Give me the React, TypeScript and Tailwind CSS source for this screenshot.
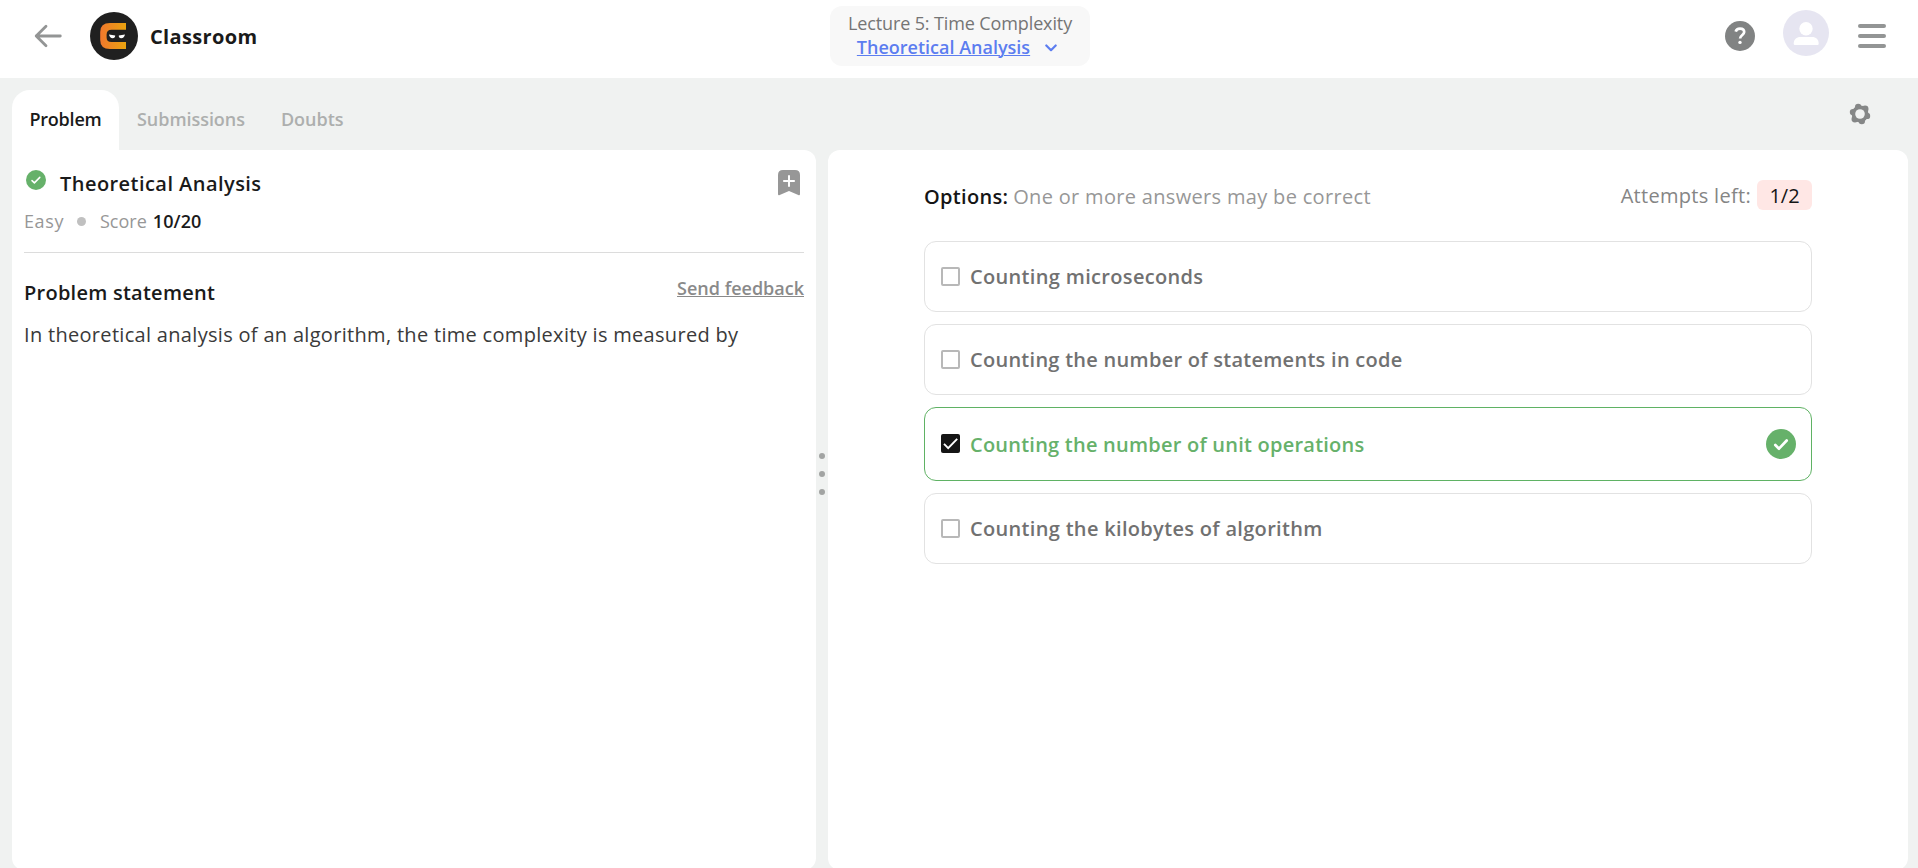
import { useState } from "react";

type Option = { label: string; tracking: string; correct?: boolean };

const options: Option[] = [
  { label: "Counting microseconds", tracking: "tracking-[0.33px]" },
  { label: "Counting the number of statements in code", tracking: "tracking-[0.27px]" },
  { label: "Counting the number of unit operations", tracking: "tracking-[0.23px]", correct: true },
  { label: "Counting the kilobytes of algorithm", tracking: "tracking-[0.32px]" },
];

function BackArrow() {
  return (
    <svg className="h-6 w-7" viewBox="0 0 28 24" fill="none" stroke="#939595" strokeWidth="2.8" strokeLinecap="round" strokeLinejoin="round">
      <path d="M26.300 12H2.200M12 2.200 2.200 12l9.800 9.800" />
    </svg>
  );
}

function Logo() {
  return (
    <svg className="size-12" viewBox="0 0 48 48">
      <defs>
        <linearGradient id="logoFill" x1="0" y1="0" x2="1" y2="0">
          <stop offset="0" stopColor="#f0782d" />
          <stop offset="1" stopColor="#eaa30f" />
        </linearGradient>
      </defs>
      <circle cx="24" cy="24" r="24" fill="#202020" />
      <path d="M20 11H36V17.800H21.500Q16.600 17.800 16.600 22.500V25.500Q16.600 30 21.500 30H36V37H20Q10.200 37 10.200 28V20Q10.200 11 20 11Z" fill="url(#logoFill)" />
      <path d="M19 22.600 25.200 23.500Q25.200 26.200 22.600 26.200 19.800 26.200 19 22.600ZM35 22.600 28.800 23.500Q28.600 26.200 31.200 26.200 34.200 26.200 35 22.600Z" fill="#fff" />
    </svg>
  );
}

function Avatar() {
  return (
    <svg className="size-[46px]" viewBox="0 0 46 46">
      <circle cx="23" cy="23" r="23" fill="#e6e5f1" />
      <circle cx="23" cy="18.800" r="6.700" fill="#fff" />
      <path d="M10.700 33.800C10.700 29.200 13.500 27 17.500 27H29C33 27 35.700 29.200 35.700 33.800Q35.700 35 34.500 35H12Q10.700 35 10.700 33.800Z" fill="#fff" />
    </svg>
  );
}

function Gear() {
  return (
    <svg className="size-5 overflow-visible" viewBox="0 0 20 20">
      <g fill="#858787">
        <circle cx="8.200" cy="3" r="3.200" />
        <circle cx="15.100" cy="4.900" r="3.400" />
        <circle cx="17" cy="11.900" r="3.200" />
        <circle cx="11.800" cy="17" r="3.200" />
        <circle cx="4.900" cy="15.100" r="3.400" />
        <circle cx="3" cy="8.100" r="3.200" />
        <circle cx="10" cy="10" r="8.400" />
      </g>
      <circle cx="10" cy="10" r="4.800" fill="#f0f2f1" />
    </svg>
  );
}

function SolvedBadge() {
  return (
    <svg className="size-5" viewBox="0 0 20 20">
      <circle cx="10" cy="10" r="10" fill="#66b16a" />
      <path d="m6 10.600 2.400 2.300 5.400-5.500" fill="none" stroke="#fff" strokeWidth="1.500" strokeLinecap="round" strokeLinejoin="round" />
    </svg>
  );
}

function BookmarkAdd() {
  return (
    <svg className="h-[26px] w-[22px]" viewBox="0 0 22 26">
      <path d="M5 0H17Q22 0 22 5V24Q22 25.800 20.300 25.100L11 20.900 1.700 25.100Q0 25.800 0 24V5Q0 0 5 0Z" fill="#979797" />
      <path d="M11 5.200V16.800M5.200 11H16.800" stroke="#fff" strokeWidth="2" fill="none" />
    </svg>
  );
}

function Checkbox({ checked, onChange }: { checked: boolean; onChange: () => void }) {
  return (
    <button
      role="checkbox"
      aria-checked={checked}
      onClick={onChange}
      className={
        checked
          ? "mb-px flex size-[19px] items-center justify-center rounded-[2px] bg-[#151515]"
          : "size-[19px] rounded-[2px] border-2 border-[#b8b8b8] bg-white"
      }
    >
      {checked && (
        <svg className="size-[19px]" viewBox="0 0 19 19" fill="none" stroke="#fff" strokeWidth="1.900">
          <path d="m3 9.800 4.200 4.300L16.200 4.800" />
        </svg>
      )}
    </button>
  );
}

export default function App() {
  const [selected, setSelected] = useState<number[]>([2]);
  const toggle = (i: number) =>
    setSelected((s) => (s.includes(i) ? s.filter((x) => x !== i) : [...s, i]));

  return (
    <div className="flex h-screen flex-col overflow-hidden bg-[#f0f2f1] font-['Open_Sans',sans-serif] text-[#1a1a1a]">
      <header className="grid h-[78px] shrink-0 grid-cols-[830px_260px_1fr] bg-white pt-1.5">
        <div className="flex h-[60px] items-center pl-[34px]">
          <BackArrow />
          <div className="ml-7">
            <Logo />
          </div>
          <span className="mt-px ml-3 text-[20px] leading-[30px] font-bold tracking-[0.35px]">Classroom</span>
        </div>

        <div className="flex h-[60px] flex-col items-center rounded-xl bg-[#f8f8f8] pt-[5px]">
          <div className="text-[18px] leading-6 tracking-[-0.12px] text-[#757575]">Lecture 5: Time Complexity</div>
          <button className="mr-1.5 flex items-center text-[18px] leading-6 font-semibold text-[#5c7df0]">
            <span className="underline decoration-1 underline-offset-1">Theoretical Analysis</span>
            <svg className="mt-0.5 ml-[15px] h-2 w-3" viewBox="0 0 12 8" fill="none" stroke="currentColor" strokeWidth="2.200" strokeLinecap="round" strokeLinejoin="round">
              <path d="m1.300 1.500 4.700 4.700 4.700-4.700" />
            </svg>
          </button>
        </div>

        <div className="flex h-[60px] items-center justify-end pr-8">
          <span className="flex size-[30px] items-center justify-center rounded-full bg-[#818383]">
            <svg className="h-[18px] w-3" viewBox="0 0 12 18" fill="none">
              <path d="M1.700 4.700C2.200 2.700 3.700 1.700 6 1.700 8.500 1.700 10.200 3 10.200 5.100 10.200 8 6.100 8 6.100 11.600" stroke="#fff" strokeWidth="2.700" />
              <circle cx="6" cy="15.400" r="1.700" fill="#fff" />
            </svg>
          </span>
          <div className="mb-1.5 ml-7">
            <Avatar />
          </div>
          <div className="ml-[29px] flex w-7 flex-col gap-1.5">
            <span className="h-1 rounded-full bg-[#939595]" />
            <span className="h-1 rounded-full bg-[#939595]" />
            <span className="h-1 rounded-full bg-[#939595]" />
          </div>
        </div>
      </header>

      <nav className="flex h-[72px] shrink-0 items-end justify-between pr-12 pl-3">
        <div className="flex h-[60px] text-[18px] leading-[58px] font-semibold text-[#adafae]">
          <button className="h-[60px] w-[107px] rounded-t-[18px] bg-white pb-0.5 tracking-[-0.2px] text-[#1a1a1a]">Problem</button>
          <button className="ml-[18px] pb-0.5 tracking-[-0.05px]">Submissions</button>
          <button className="ml-9 pb-0.5">Doubts</button>
        </div>
        <div className="mb-[26px]">
          <Gear />
        </div>
      </nav>

      <main className="flex h-[720px] shrink-0 pr-2.5 pl-3">
        <section className="w-[804px] rounded-tr-xl rounded-b-xl bg-white px-3 pt-[18px]">
          <div className="flex h-[30px] items-start">
            <div className="mt-0.5 ml-0.5">
              <SolvedBadge />
            </div>
            <h1 className="mt-px ml-3.5 text-[20px] leading-[30px] font-semibold tracking-[0.45px]">Theoretical Analysis</h1>
            <div className="mt-0.5 mr-1 ml-auto">
              <BookmarkAdd />
            </div>
          </div>
          <div className="mt-2 flex h-[30px] items-center text-[18px] leading-[30px] text-[#979797]">
            <span className="tracking-[0.6px]">Easy</span>
            <span className="ml-[13px] size-[9px] rounded-full bg-[#c0c0c0]" />
            <span className="ml-3.5">Score</span>
            <span className="ml-1.5 font-semibold tracking-[0.1px] text-[#1a1a1a]">10/20</span>
          </div>
          <hr className="mt-4 border-t border-[#dcdcdc]" />
          <div className="mt-6 flex items-start justify-between">
            <h2 className="mt-px text-[20px] leading-[30px] font-semibold tracking-[0.25px]">Problem statement</h2>
            <a href="#" className="text-[18px] leading-[22px] font-semibold text-[#8a8a8a] underline decoration-1 underline-offset-1">
              Send feedback
            </a>
          </div>
          <p className="mt-3 text-[20px] leading-[30px] tracking-[0.31px] whitespace-nowrap text-[#3a3a3a]">
            In theoretical analysis of an algorithm, the time complexity is measured by
          </p>
        </section>

        <div className="flex w-3 flex-col items-center gap-3 pt-[303px]">
          <span className="size-1.5 rounded-full bg-[#a2a4a3]" />
          <span className="size-1.5 rounded-full bg-[#a2a4a3]" />
          <span className="size-1.5 rounded-full bg-[#a2a4a3]" />
        </div>

        <section className="flex-1 rounded-xl bg-white px-24 pt-[30px]">
          <div className="flex h-[30px] items-center justify-between text-[20px] leading-[30px]">
            <div className="pt-[3px] text-[#979797]">
              <span className="font-semibold tracking-[0.3px] text-[#151515]">Options:</span>
              <span className="ml-[5px] tracking-[0.32px]">One or more answers may be correct</span>
            </div>
            <div className="flex items-center">
              <span className="pt-px tracking-[0.3px] text-[#858585]">Attempts left:</span>
              <span className="ml-1.5 h-[30px] w-[55px] rounded-md bg-[#ffe7e5] text-center leading-[31px] text-[#151515]">1/2</span>
            </div>
          </div>
          <div className="mt-[31px] flex flex-col gap-3">
            {options.map((o, i) => (
              <div
                key={o.label}
                className={
                  o.correct
                    ? "flex h-[74px] items-center rounded-xl border border-[#5fb264] pr-[15px] pl-4 text-[#66b16a]"
                    : "flex h-[71px] items-center rounded-xl border border-[#e2e2e2] pr-[15px] pl-4 text-[#717171]"
                }
              >
                <Checkbox checked={selected.includes(i)} onChange={() => toggle(i)} />
                <span className={o.correct ? "mt-px ml-2.5 text-[20px] leading-[30px] font-semibold" : "ml-2.5 text-[20px] leading-[30px] font-semibold"}>
                  <span className={o.tracking}>{o.label}</span>
                </span>
                {o.correct && (
                  <svg className="ml-auto size-[30px]" viewBox="0 0 30 30">
                    <circle cx="15" cy="15" r="15" fill="#66b16a" />
                    <path d="m9.300 16 3.700 3.700 7.700-8.200" fill="none" stroke="#fff" strokeWidth="2.700" strokeLinecap="round" strokeLinejoin="round" />
                  </svg>
                )}
              </div>
            ))}
          </div>
        </section>
      </main>
    </div>
  );
}
